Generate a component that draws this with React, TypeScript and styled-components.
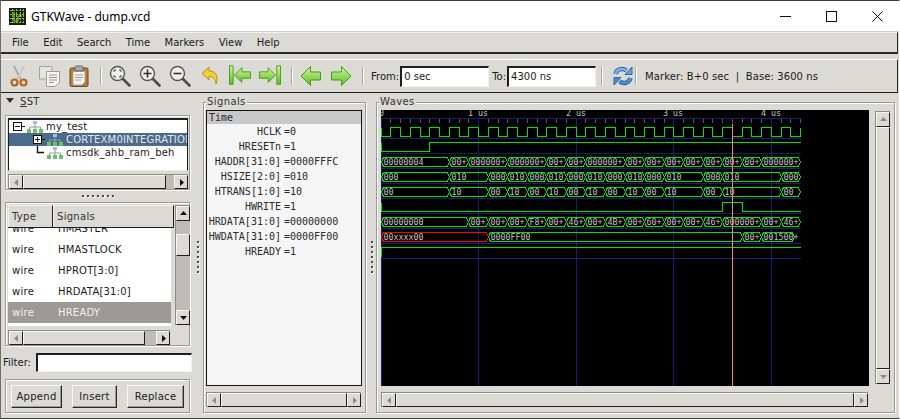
import React from "react";
import styled, { createGlobalStyle } from "styled-components";

const GlobalStyle = createGlobalStyle`
  html, body {
    margin: 0;
    padding: 0;
    background: #fff;
  }
  * {
    box-sizing: border-box;
  }
`;

const UI_FONT = `"DejaVu Sans", sans-serif`;
const MONO_FONT = `"DejaVu Sans Mono", monospace`;

const Window = styled.div`
  width: 900px;
  height: 419px;
  display: flex;
  flex-direction: column;
  background: #dcdad5;
  border-top: 1px solid #3c3c3c;
  border-left: 1px solid #6e6e6e;
  border-bottom: 1px solid #3c3c3c;
  border-right: 1px solid #fff;
  font-family: ${UI_FONT};
  font-size: 10px;
  color: #1a1a1a;
  overflow: hidden;
`;

const TitleBar = styled.div`
  height: 31px;
  flex: none;
  display: flex;
  align-items: center;
  background: #fff;
  padding-left: 8px;
  margin-right: -1px;
  border-bottom: 1px solid #cfcfcf;
`;

const TitleText = styled.span`
  margin-left: 5px;
  font-family: "Noto Sans", sans-serif;
  font-size: 12px;
  color: #000;
`;

const TitleButtons = styled.div`
  margin-left: auto;
  display: flex;
`;

const TitleButton = styled.div`
  width: 46px;
  height: 30px;
  display: flex;
  align-items: center;
  justify-content: center;
`;

const MenuBar = styled.div`
  height: 22px;
  flex: none;
  display: flex;
  align-items: center;
  gap: 14.4px;
  padding: 0 0 1px 11px;
  margin-right: 1px;
  border-top: 1px solid #f2f1ee;
  border-bottom: 2px solid #2a2a2a;
  border-right: 1px solid #2a2a2a;
`;

const MenuItem = styled.span`
  color: #1a1a1a;
`;

const ToolBar = styled.div`
  height: 34px;
  flex: none;
  margin: 5px 1px 0 0;
  display: flex;
  align-items: center;
  padding-left: 7px;
  border-top: 1px solid #fff;
  border-bottom: 1px solid #1e1e1e;
  border-right: 1px solid #2a2a2a;
`;

const ToolIcon = styled.div`
  width: 22px;
  height: 22px;
  margin-right: 8px;
  flex: none;
`;

const ToolSep = styled.div<{ $after?: number }>`
  width: 2px;
  height: 18px;
  flex: none;
  background: #fff;
  border-left: 1px solid #a9a8a2;
  margin: 0 ${(p) => p.$after ?? 7}px 0 2px;
`;

const ToolLabel = styled.span<{ $gap: number }>`
  margin-right: ${(p) => p.$gap}px;
`;

const TimeInput = styled.div`
  width: 89px;
  height: 21px;
  flex: none;
  background: #fff;
  border-top: 2px solid #1e1e1e;
  border-left: 2px solid #1e1e1e;
  border-right: 1px solid #f2f1ee;
  border-bottom: 1px solid #f2f1ee;
  padding-left: 2px;
  line-height: 17px;
  margin-right: 3px;
`;

const MarkerText = styled.span`
  margin-left: 5px;
  white-space: pre;
  letter-spacing: 0.1px;
`;

const Main = styled.div`
  flex: 1;
  min-height: 0;
  display: flex;
`;

const LeftPane = styled.div`
  width: 194px;
  flex: none;
  padding-left: 4px;
  display: flex;
  flex-direction: column;
`;

const SstHeader = styled.div`
  height: 16px;
  margin-bottom: 6px;
  display: flex;
  align-items: center;
  gap: 6px;
  padding-left: 1px;
  color: #333;
  letter-spacing: 0.3px;
`;

const Underlined = styled.span`
  text-decoration: underline;
`;

const Etched = styled.div`
  border: 1px solid #9a9a94;
  box-shadow: inset 1px 1px 0 #fff, 1px 1px 0 #fff;
`;

const TreeFrame = styled(Etched)`
  width: 185px;
  height: 75px;
  padding: 2px 1px 2px 2px;
  display: flex;
  flex-direction: column;
  gap: 3px;
`;

const Tree = styled.div`
  width: 180px;
  height: 53px;
  flex: none;
  background: #fff;
  border-top: 2px solid #1e1e1e;
  border-left: 1px solid #1e1e1e;
  border-right: 1px solid #1e1e1e;
  border-bottom: 1px solid #e8e7e3;
  overflow: hidden;
  padding-top: 0;
`;

const TreeRow = styled.div<{ $depth: number; $selected?: boolean }>`
  height: 13px;
  display: flex;
  align-items: center;
  white-space: nowrap;
  padding-left: ${(p) => 4 + p.$depth * 20}px;
  background: ${(p) => (p.$selected ? "#4b6b8c" : "transparent")};
  color: ${(p) => (p.$selected ? "#e6e6e6" : "#1a1a1a")};
`;

const TreeName = styled.span`
  margin-left: 3px;
  letter-spacing: 0.2px;
`;

const PaneHandleH = styled.div`
  height: 12px;
  flex: none;
  width: 185px;
  display: flex;
  align-items: center;
  justify-content: center;
  gap: 3px;
`;

const Grip = styled.span`
  width: 2px;
  height: 2px;
  flex: none;
  background: #4a4a4a;
  box-shadow: 1px 1px 0 #fff;
`;

const ListFrame = styled(Etched)`
  width: 185px;
  height: 144px;
  padding: 2px 1px 1px 2px;
  display: flex;
  flex-direction: column;
  gap: 5px;
`;

const ListTop = styled.div`
  display: flex;
  height: 120px;
  flex: none;
  gap: 1px;
`;

const ListColumn = styled.div`
  width: 166px;
  flex: none;
`;

const ListHeader = styled.div`
  height: 23px;
  display: flex;
  border-bottom: 1px solid #1e1e1e;
`;

const HeaderCell = styled.div<{ $width: number }>`
  width: ${(p) => p.$width}px;
  flex: none;
  padding-left: 3px;
  line-height: 22px;
  color: #333;
  letter-spacing: 0.3px;
  border-top: 1px solid #f2f1ee;
  border-left: 1px solid #f2f1ee;
  border-right: 1px solid #1e1e1e;
`;

const ListBody = styled.div`
  width: 163px;
  height: 98px;
  background: #fff;
  overflow: hidden;
`;

const ListRow = styled.div<{ $selected?: boolean; $first?: boolean }>`
  height: 21px;
  display: flex;
  align-items: center;
  margin-top: ${(p) => (p.$first ? "-10px" : "0")};
  background: ${(p) => (p.$selected ? "#9c9a94" : "transparent")};
  color: ${(p) => (p.$selected ? "#f0f0f0" : "#1a1a1a")};
`;

const ListType = styled.span`
  width: 50px;
  padding-left: 4px;
  flex: none;
  letter-spacing: 0.3px;
`;

const ListName = styled.span`
  letter-spacing: 0.2px;
`;

const FilterRow = styled.div`
  height: 19px;
  margin: 7px 0 7px -2px;
  display: flex;
  align-items: center;
`;

const FilterInput = styled.div`
  width: 156px;
  height: 19px;
  margin-left: 5px;
  background: #fff;
  border-top: 2px solid #1e1e1e;
  border-left: 2px solid #1e1e1e;
  border-right: 1px solid #f2f1ee;
  border-bottom: 1px solid #f2f1ee;
`;

const ButtonFrame = styled(Etched)`
  width: 185px;
  height: 34px;
  display: flex;
  align-items: center;
  gap: 10px;
  padding-left: 5px;
`;

const ActionButton = styled.div<{ $width: number }>`
  width: ${(p) => p.$width}px;
  height: 23px;
  display: flex;
  align-items: center;
  justify-content: center;
  background: #dcdad5;
  border: 1px solid #f7f6f3;
  border-right-color: #2a2a2a;
  border-bottom-color: #2a2a2a;
  box-shadow: inset -1px -1px 0 #9a9a94;
  letter-spacing: 0.3px;
`;

const PaneHandleV = styled.div<{ $width: number; $inset: number }>`
  width: ${(p) => p.$width}px;
  flex: none;
  display: flex;
  flex-direction: column;
  justify-content: flex-start;
  gap: 3px;
  padding: 148px 0 0 ${(p) => p.$inset}px;
`;

const LabeledFrame = styled(Etched)<{ $width: number }>`
  position: relative;
  width: ${(p) => p.$width}px;
  height: 311px;
  margin-top: 9px;
  flex: none;
  padding: 7px 0 0 2px;
`;

const FrameLabel = styled.span`
  position: absolute;
  left: 2px;
  top: -7px;
  padding: 0 1px;
  background: #dcdad5;
  color: #333;
  line-height: 12px;
  letter-spacing: 0.4px;
`;

const SignalList = styled.div`
  width: 156px;
  height: 276px;
  background: #f5f5f5;
  border: 1px solid #111;
  font-family: ${MONO_FONT};
  color: #2a2a2a;
`;

const TimeRow = styled.div`
  height: 13px;
  background: #c8c8c8;
  padding-left: 2px;
  line-height: 13px;
`;

const SignalRow = styled.div`
  height: 15px;
  display: flex;
  align-items: center;
  white-space: pre;
  &:first-of-type {
    margin-top: 1px;
  }
`;

const SignalName = styled.span`
  width: 74px;
  flex: none;
  text-align: right;
`;

const SignalValue = styled.span`
  margin-left: 3px;
`;

const WavesRow = styled.div`
  display: flex;
  gap: 6px;
  padding-left: 2px;
`;

const WaveCanvas = styled.svg`
  display: block;
  width: 488px;
  height: 276px;
  flex: none;
  background: #000;
`;

const WaveText = styled.text`
  font-family: ${MONO_FONT};
  font-size: 8.3px;
  fill: #c4c4c4;
`;

const VScrollSlot = styled.div`
  padding-top: 1px;
`;

const Scroll = styled.div<{ $vertical?: boolean; $length: number; $noBorder?: boolean }>`
  display: flex;
  flex: none;
  flex-direction: ${(p) => (p.$vertical ? "column" : "row")};
  width: ${(p) => (p.$vertical ? "15px" : `${p.$length}px`)};
  height: ${(p) => (p.$vertical ? `${p.$length}px` : "15px")};
  background: #bdbcb5;
  border-top: 1px solid #8d8c86;
  border-left: 1px solid #8d8c86;
`;

const ScrollBtn = styled.div<{ $vertical?: boolean }>`
  width: ${(p) => (p.$vertical ? "100%" : "14px")};
  height: ${(p) => (p.$vertical ? "15px" : "100%")};
  flex: none;
  display: flex;
  align-items: center;
  justify-content: center;
  background: #dcdad5;
  border: 1px solid #f7f6f3;
  border-right-color: #1e1e1e;
  border-bottom-color: #1e1e1e;
`;

const ScrollThumb = styled.div<{ $vertical?: boolean; $size: number; $offset: number }>`
  flex: ${(p) => (p.$size > 0 ? "none" : "1")};
  ${(p) => (p.$vertical ? "height" : "width")}: ${(p) => (p.$size > 0 ? `${p.$size}px` : "auto")};
  margin-${(p) => (p.$vertical ? "top" : "left")}: ${(p) => p.$offset}px;
  margin-${(p) => (p.$vertical ? "bottom" : "right")}: auto;
  background: #dcdad5;
  border: 1px solid #f7f6f3;
  border-right-color: #1e1e1e;
  border-bottom-color: #1e1e1e;
`;

const BelowSpacer = styled.div`
  height: 6px;
`;

const Triangle = ({ dir, active }: { dir: "l" | "r" | "u" | "d"; active?: boolean }) => {
  const pts = { l: "6,1 6,8 2,4.5", r: "3,1 3,8 7,4.5", u: "1,6 8,6 4.5,2", d: "1,3 8,3 4.5,7" }[dir];
  return (
    <svg width="9" height="9" viewBox="0 0 9 9">
      <polygon points={pts} fill={active ? "#111" : "#8e8d88"} />
    </svg>
  );
};

const ScrollBar = ({
  vertical,
  length,
  size = 0,
  offset = 0,
  startActive,
  endActive,
}: {
  vertical?: boolean;
  length: number;
  size?: number;
  offset?: number;
  startActive?: boolean;
  endActive?: boolean;
}) => (
  <Scroll $vertical={vertical} $length={length}>
    <ScrollBtn $vertical={vertical}>
      <Triangle dir={vertical ? "u" : "l"} active={startActive} />
    </ScrollBtn>
    <ScrollThumb $vertical={vertical} $size={size} $offset={offset} />
    <ScrollBtn $vertical={vertical}>
      <Triangle dir={vertical ? "d" : "r"} active={endActive} />
    </ScrollBtn>
  </Scroll>
);

// --- toolbar drawings ---

const AppIcon = () => (
  <svg width="17" height="17" viewBox="0 0 17 17">
    <rect width="17" height="17" fill="#1c1c14" />
    <path
      d="M1 2.5H16M1 6.5H16M1 10.5H16M1 14.5H16M3.5 1V16M7.5 1V16M11.5 1V16M14.5 1V16"
      stroke="#7fc31c"
      strokeWidth="1"
      strokeDasharray="2 1"
    />
    <path d="M5 4V13H9V8H13" stroke="#a5e52a" fill="none" />
  </svg>
);

const ScissorsIcon = () => (
  <svg viewBox="0 0 22 22">
    <path d="M6 1L12.5 14" stroke="#a8a8a4" strokeWidth="2" />
    <path d="M16 1L9.5 14" stroke="#c9c9c5" strokeWidth="2" />
    <circle cx="6.5" cy="17.5" r="3" fill="none" stroke="#b5651d" strokeWidth="2.2" />
    <circle cx="15.5" cy="17.5" r="3" fill="none" stroke="#b5651d" strokeWidth="2.2" />
  </svg>
);

const CopyIcon = () => (
  <svg viewBox="0 0 22 22">
    <path d="M1.5 1.5H14V14H1.5Z" fill="#e4e4e0" stroke="#a3a39e" />
    <path d="M8.5 6.5H21.5V17L17 21.5H8.5Z" fill="#f6f6f4" stroke="#9d9d98" />
    <path d="M11 10H19M11 12.5H19M11 15H19M11 17.5H16" stroke="#8f8f8a" />
  </svg>
);

const PasteIcon = () => (
  <svg viewBox="0 0 22 22">
    <rect x="2" y="3" width="18" height="18.5" rx="1.5" fill="#b87a35" stroke="#6f4618" />
    <path d="M5 6.5H17V17L14 20H5Z" fill="#f4f4f2" stroke="#a3a39e" />
    <path d="M7 10H15M7 12.5H15M7 15H13" stroke="#9b9b96" />
    <rect x="7" y="1" width="8" height="5" rx="1.5" fill="#a9a9a5" stroke="#666" />
  </svg>
);

const Magnifier = ({ children }: { children: React.ReactNode }) => (
  <svg viewBox="0 0 22 22">
    <line x1="13.5" y1="13.5" x2="20.5" y2="20.5" stroke="#4c4c4c" strokeWidth="2.6" strokeLinecap="round" />
    <circle cx="8.5" cy="8.5" r="7" fill="#efefec" stroke="#555" strokeWidth="1.4" />
    {children}
  </svg>
);

const UndoIcon = () => (
  <svg viewBox="0 0 22 22">
    <path
      d="M3 8.5L10 2V6C16 6 20 10 17 19C16.5 14 14 11.5 10 11.5V15Z"
      fill="#f3cf3a"
      stroke="#b1930f"
      strokeWidth="1"
      strokeLinejoin="round"
    />
  </svg>
);

const greenArrow = { fill: "url(#greenFill)", stroke: "#3f9f12", strokeWidth: 1, strokeLinejoin: "round" as const };

const FirstIcon = () => (
  <svg viewBox="0 0 24 22" style={{ overflow: "visible" }}>
    <rect x="0.5" y="1" width="4" height="20" fill="url(#greenFill)" stroke="#3f9f12" />
    <path d="M6 11L14 3V7.5H23.5V14.5H14V19Z" {...greenArrow} />
  </svg>
);

const LastIcon = () => (
  <svg viewBox="0 0 24 22" style={{ overflow: "visible" }}>
    <rect x="19.5" y="1" width="4" height="20" fill="url(#greenFill)" stroke="#3f9f12" />
    <path d="M18 11L10 3V7.5H0.5V14.5H10V19Z" {...greenArrow} />
  </svg>
);

const LeftIcon = () => (
  <svg viewBox="0 0 22 22">
    <path d="M1 11L10.5 1.5V7H20.5V15H10.5V20.5Z" {...greenArrow} />
  </svg>
);

const RightIcon = () => (
  <svg viewBox="0 0 22 22">
    <path d="M21 11L11.5 1.5V7H1.5V15H11.5V20.5Z" {...greenArrow} />
  </svg>
);

const RefreshIcon = () => (
  <svg width="20" height="22" viewBox="0 0 20 22" style={{ flex: "none" }}>
    <path d="M2.5 9C3.5 4.5 9 2.5 13.5 5.5" fill="none" stroke="#2d68a8" strokeWidth="4.4" />
    <path d="M2.5 9C3.5 4.5 9 2.5 13.5 5.5" fill="none" stroke="#7fb0e0" strokeWidth="2.6" />
    <path d="M12 9.5H19V2Z" fill="#6ea3d8" stroke="#2d68a8" />
    <path d="M17.5 13C16.5 17.5 11 19.5 6.5 16.5" fill="none" stroke="#2d68a8" strokeWidth="4.4" />
    <path d="M17.5 13C16.5 17.5 11 19.5 6.5 16.5" fill="none" stroke="#4f8ccb" strokeWidth="2.6" />
    <path d="M8 12.5H1V20Z" fill="#4f8ccb" stroke="#2d68a8" />
  </svg>
);

const ModuleIcon = () => (
  <svg width="16" height="12" viewBox="0 0 16 12" style={{ flex: "none" }}>
    <rect x="6" y="0" width="4" height="3" fill="#9dbde0" />
    <path d="M8 3V6M2.5 6H13.5M2.5 6V8M8 6V8M13.5 6V8" stroke="#9a9a9a" fill="none" />
    <rect x="0" y="8" width="4" height="4" fill="#6cc06c" />
    <rect x="6" y="8" width="4" height="4" fill="#6cc06c" />
    <rect x="12" y="8" width="4" height="4" fill="#6cc06c" />
  </svg>
);

const TreeLead = ({ kind }: { kind: "minus" | "plus" | "last" }) => (
  <svg width="14" height="13" viewBox="0 0 14 13" style={{ flex: "none" }}>
    {kind === "last" ? (
      <path d="M4.5 0V6.5H11" stroke="#111" strokeWidth="1.4" fill="none" />
    ) : (
      <>
        <rect x="0.5" y="2.5" width="8" height="8" fill="#fff" stroke="#111" />
        <path d="M2 6.5H7M9 6.5H12" stroke="#111" />
        {kind === "plus" && <path d="M4.5 4V9" stroke="#111" />}
      </>
    )}
  </svg>
);

// --- wave data ---

const PX_PER_NS = 0.0976;
const px = (t: number) => Math.floor(PX_PER_NS * t);
const SPAN_END = 420;
const END_T = 4300;
const ROW_SEPS = [28, 43, 58, 73, 88, 103, 118, 133, 148];

type Seg = [number, string];

const busRows: { row: number; red?: Seg[]; segs: Seg[]; end?: number }[] = [
  {
    row: 2,
    segs: [
      [0, "00000004"], [700, "00+"], [900, "000000+"], [1300, "000000+"], [1700, "00+"], [1900, "00+"],
      [2100, "000000+"], [2500, "00+"], [2700, "00+"], [2900, "00+"], [3100, "00+"], [3300, "00+"],
      [3500, "00+"], [3700, "00+"], [3900, "000000+"],
    ],
  },
  {
    row: 3,
    segs: [
      [0, "000"], [700, "010"], [1100, "000"], [1300, "010"], [1500, "000"], [1700, "010"], [1900, "000"],
      [2100, "010"], [2300, "000"], [2500, "010"], [2700, "000"], [2900, "010"], [3300, "000"], [3500, "010"],
      [4100, "000"],
    ],
  },
  {
    row: 4,
    segs: [
      [0, "00"], [700, "10"], [1100, "00"], [1300, "10"], [1500, "00"], [1700, "10"], [1900, "00"],
      [2100, "10"], [2300, "00"], [2500, "10"], [2700, "00"], [2900, "10"], [3300, "00"], [3500, "10"],
      [4100, "00"],
    ],
  },
  {
    row: 6,
    segs: [
      [0, "00000000"], [900, "00+"], [1100, "00+"], [1300, "00+"], [1500, "F8+"], [1700, "00+"], [1900, "46+"],
      [2100, "00+"], [2300, "4B+"], [2500, "00+"], [2700, "60+"], [2900, "00+"], [3100, "00+"], [3300, "46+"],
      [3500, "000000+"], [3900, "00+"], [4100, "46+"],
    ],
  },
  {
    row: 7,
    red: [[0, "00xxxx00"]],
    segs: [[1100, "0000FF00"], [3700, "00+"], [3900, "001500+"]],
    end: 4240,
  },
];

const busPath = (x1: number, x2: number, top: number, bot: number) => {
  const mid = (top + bot) / 2;
  return `M${x1 + 0.5} ${mid}L${x1 + 2.5} ${top}H${x2 - 1.5}L${x2 + 0.5} ${mid}L${x2 - 1.5} ${bot}H${x1 + 2.5}Z`;
};

const clockPath = () => {
  const sep = ROW_SEPS[0];
  const hi = sep - 10.5;
  const lo = sep - 1.5;
  let d = `M0.5 ${hi}V${lo}`;
  let level = false;
  for (let t = 100; t < END_T; t += 100) {
    d += `H${px(t) + 0.5}V${level ? lo : hi}`;
    level = !level;
  }
  return d + `H${px(END_T) + 0.5}V${level ? hi : hi}`;
};

const WaveView = () => {
  const usTimes = [0, 1000, 2000, 3000, 4000];
  const ticks = Array.from({ length: 43 }, (_, i) => (i + 1) * 100);
  const green = "#00e400";

  const renderBus = (row: number, segs: Seg[], stop: number, color: string) => {
    const top = ROW_SEPS[row] - 10.5;
    const bot = ROW_SEPS[row] - 1.5;
    return segs.map(([t, label], i) => {
      const next = i + 1 < segs.length ? segs[i + 1][0] : stop;
      const x1 = px(t);
      const x2 = px(next);
      return (
        <React.Fragment key={`${row}-${t}`}>
          <path d={busPath(x1, x2, top, bot)} fill="none" stroke={color} />
          <WaveText x={x1 + 2.5} y={bot - 1.5}>
            {label}
          </WaveText>
        </React.Fragment>
      );
    });
  };

  return (
    <WaveCanvas viewBox="0 0 488 276" shapeRendering="crispEdges">
      <path d={`M0 8.5H${px(END_T) + 1}`} stroke="#1c1c78" />
      {ROW_SEPS.map((s) => (
        <path key={s} d={`M0 ${s + 0.5}H${px(END_T) + 1}`} stroke="#1c1c78" />
      ))}
      {ticks.map((t) => (
        <path key={t} d={`M${px(t) + 0.5} 9V13`} stroke="#50508c" />
      ))}
      {usTimes.map((t) => (
        <path key={t} d={`M${px(t) + 0.5} 8V276`} stroke="#1c1c78" />
      ))}
      <WaveText x={-2} y={6}>0</WaveText>
      {usTimes.slice(1).map((t, i) => (
        <WaveText key={t} x={px(t) - 10} y={6}>
          {`${i + 1} us`}
        </WaveText>
      ))}

      <path d={clockPath()} fill="none" stroke={green} />
      <path
        d={`M0.5 ${ROW_SEPS[1] - 10.5}V${ROW_SEPS[1] - 1.5}H${px(500) + 0.5}V${ROW_SEPS[1] - 10.5}H${px(END_T) + 1}`}
        fill="none"
        stroke={green}
      />
      <path
        d={`M0.5 ${ROW_SEPS[5] - 10.5}V${ROW_SEPS[5] - 1.5}H${px(3500) + 0.5}V${ROW_SEPS[5] - 10.5}H${px(3700) + 0.5}V${ROW_SEPS[5] - 1.5}H${px(END_T) + 1}`}
        fill="none"
        stroke={green}
      />
      <path
        d={`M0.5 ${ROW_SEPS[8] - 1.5}V${ROW_SEPS[8] - 10.5}H${px(END_T) + 1}`}
        fill="none"
        stroke={green}
      />

      {busRows.map((b) => (
        <React.Fragment key={b.row}>
          {b.red && renderBus(b.row, b.red, b.segs[0][0], "#ff0000")}
          {renderBus(b.row, b.segs, b.end ?? END_T, green)}
        </React.Fragment>
      ))}

      <path d={`M${px(3600) + 0.5} 14V276`} stroke="#ff8080" />
    </WaveCanvas>
  );
};

const signals: [string, string][] = [
  ["HCLK", "=0"],
  ["HRESETn", "=1"],
  ["HADDR[31:0]", "=0000FFFC"],
  ["HSIZE[2:0]", "=010"],
  ["HTRANS[1:0]", "=10"],
  ["HWRITE", "=1"],
  ["HRDATA[31:0]", "=00000000"],
  ["HWDATA[31:0]", "=0000FF00"],
  ["HREADY", "=1"],
];

const listRows = ["HMASTER", "HMASTLOCK", "HPROT[3:0]", "HRDATA[31:0]", "HREADY"];

const Grips = ({ count }: { count: number }) => (
  <>
    {Array.from({ length: count }, (_, i) => (
      <Grip key={i} />
    ))}
  </>
);

const App = () => {
  return (
    <>
      <GlobalStyle />
      <svg width="0" height="0" style={{ display: "block" }}>
        <defs>
          <linearGradient id="greenFill" x1="0" y1="0" x2="0" y2="1">
            <stop offset="0" stopColor="#d3f79a" />
            <stop offset="1" stopColor="#5dbb2a" />
          </linearGradient>
        </defs>
      </svg>
      <Window>
        <TitleBar>
          <AppIcon />
          <TitleText>GTKWave - dump.vcd</TitleText>
          <TitleButtons>
            <TitleButton>
              <svg width="11" height="11" viewBox="0 0 11 11">
                <path d="M0 5.5H11" stroke="#111" />
              </svg>
            </TitleButton>
            <TitleButton>
              <svg width="11" height="11" viewBox="0 0 11 11">
                <rect x="0.5" y="0.5" width="10" height="10" fill="none" stroke="#111" />
              </svg>
            </TitleButton>
            <TitleButton>
              <svg width="11" height="11" viewBox="0 0 11 11">
                <path d="M0.5 0.5L10.5 10.5M10.5 0.5L0.5 10.5" stroke="#111" />
              </svg>
            </TitleButton>
          </TitleButtons>
        </TitleBar>

        <MenuBar>
          {["File", "Edit", "Search", "Time", "Markers", "View", "Help"].map((m) => (
            <MenuItem key={m}>{m}</MenuItem>
          ))}
        </MenuBar>

        <ToolBar>
          <ToolIcon><ScissorsIcon /></ToolIcon>
          <ToolIcon><CopyIcon /></ToolIcon>
          <ToolIcon><PasteIcon /></ToolIcon>
          <ToolSep />
          <ToolIcon>
            <Magnifier>
              <path d="M5 7V5H7M10 5H12V7M12 10V12H10M7 12H5V10" fill="none" stroke="#444" />
            </Magnifier>
          </ToolIcon>
          <ToolIcon>
            <Magnifier>
              <path d="M4.5 8.5H12.5M8.5 4.5V12.5" stroke="#333" strokeWidth="1.6" />
            </Magnifier>
          </ToolIcon>
          <ToolIcon>
            <Magnifier>
              <path d="M4.5 8.5H12.5" stroke="#333" strokeWidth="1.6" />
            </Magnifier>
          </ToolIcon>
          <ToolIcon><UndoIcon /></ToolIcon>
          <ToolIcon><FirstIcon /></ToolIcon>
          <ToolIcon><LastIcon /></ToolIcon>
          <ToolSep />
          <ToolIcon><LeftIcon /></ToolIcon>
          <ToolIcon><RightIcon /></ToolIcon>
          <ToolSep />
          <ToolLabel $gap={1}>From:</ToolLabel>
          <TimeInput>0 sec</TimeInput>
          <ToolLabel $gap={1}>To:</ToolLabel>
          <TimeInput>4300 ns</TimeInput>
          <ToolSep $after={10} />
          <RefreshIcon />
          <ToolSep $after={3} />
          <MarkerText>{"Marker: B+0 sec  |  Base: 3600 ns"}</MarkerText>
        </ToolBar>

        <Main>
          <LeftPane>
            <SstHeader>
              <svg width="8" height="8" viewBox="0 0 8 8">
                <polygon points="0,1 8,1 4,6" fill="#333" />
              </svg>
              <span>
                <Underlined>S</Underlined>ST
              </span>
            </SstHeader>
            <TreeFrame>
              <Tree>
                <TreeRow $depth={0}>
                  <TreeLead kind="minus" />
                  <ModuleIcon />
                  <TreeName>my_test</TreeName>
                </TreeRow>
                <TreeRow $depth={1} $selected>
                  <TreeLead kind="plus" />
                  <ModuleIcon />
                  <TreeName>CORTEXM0INTEGRATION</TreeName>
                </TreeRow>
                <TreeRow $depth={1}>
                  <TreeLead kind="last" />
                  <ModuleIcon />
                  <TreeName>cmsdk_ahb_ram_beh</TreeName>
                </TreeRow>
              </Tree>
              <ScrollBar length={180} size={143} endActive />
            </TreeFrame>
            <PaneHandleH>
              <Grips count={7} />
            </PaneHandleH>
            <ListFrame>
              <ListTop>
                <ListColumn>
                  <ListHeader>
                    <HeaderCell $width={45}>Type</HeaderCell>
                    <HeaderCell $width={121}>Signals</HeaderCell>
                  </ListHeader>
                  <ListBody>
                    {listRows.map((name, i) => (
                      <ListRow key={name} $first={i === 0} $selected={name === "HREADY"}>
                        <ListType>wire</ListType>
                        <ListName>{name}</ListName>
                      </ListRow>
                    ))}
                  </ListBody>
                </ListColumn>
                <ScrollBar vertical length={120} size={22} offset={13} startActive endActive />
              </ListTop>
              <ScrollBar length={162} size={122} endActive />
            </ListFrame>
            <FilterRow>
              Filter:
              <FilterInput />
            </FilterRow>
            <ButtonFrame>
              <ActionButton $width={51}>Append</ActionButton>
              <ActionButton $width={45}>Insert</ActionButton>
              <ActionButton $width={57}>Replace</ActionButton>
            </ButtonFrame>
          </LeftPane>

          <PaneHandleV $width={8} $inset={2}>
            <Grips count={7} />
          </PaneHandleV>

          <LabeledFrame $width={163}>
            <FrameLabel>Signals</FrameLabel>
            <SignalList>
              <TimeRow>Time</TimeRow>
              {signals.map(([name, value]) => (
                <SignalRow key={name}>
                  <SignalName>{name}</SignalName>
                  <SignalValue>{value}</SignalValue>
                </SignalRow>
              ))}
            </SignalList>
            <BelowSpacer />
            <ScrollBar length={155} />
          </LabeledFrame>

          <PaneHandleV $width={10} $inset={5}>
            <Grips count={7} />
          </PaneHandleV>

          <LabeledFrame $width={519}>
            <FrameLabel>Waves</FrameLabel>
            <WavesRow>
              <WaveView />
              <VScrollSlot>
                <ScrollBar vertical length={273} />
              </VScrollSlot>
            </WavesRow>
            <BelowSpacer />
            <WavesRow>
              <ScrollBar length={487} />
            </WavesRow>
          </LabeledFrame>
        </Main>
      </Window>
    </>
  );
};

export default App;
